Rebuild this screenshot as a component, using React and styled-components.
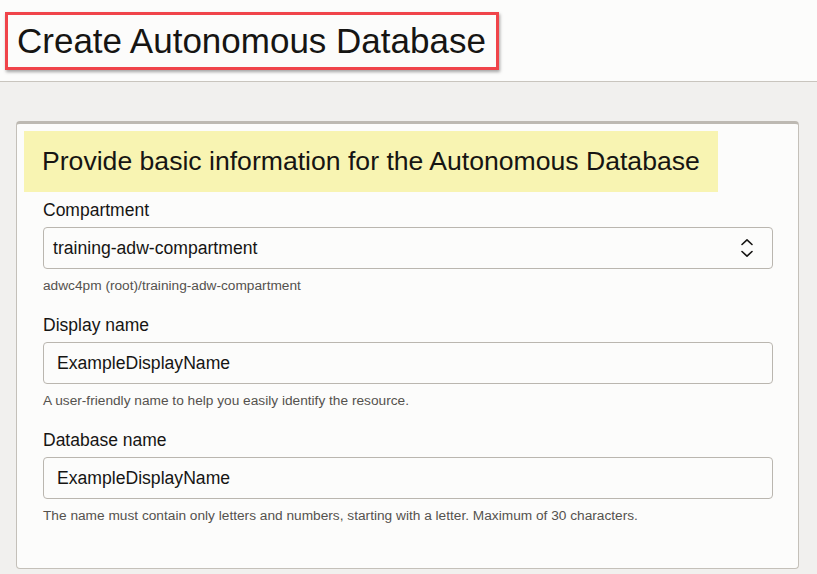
import React from 'react'
import styled, { createGlobalStyle } from "styled-components";

const GlobalStyle = createGlobalStyle`
  html, body {
    margin: 0;
    padding: 0;
    background: #f1f0ee;
    font-family: "Liberation Sans", Arial, sans-serif;
    color: #161513;
  }
`;

const Header = styled.header`
  height: 82px;
  background: #fcfcfb;
  border-bottom: 1px solid #c9c5be;
  display: flex;
  align-items: flex-start;
  padding: 12px 0 0 5px;
  box-sizing: border-box;
`;

const TitleBox = styled.div`
  border: 3px solid #f0444a;
  box-shadow: 1px 2px 3px rgba(0, 0, 0, 0.35);
  height: 58px;
  box-sizing: border-box;
  padding: 0 10px 0 9px;
  display: flex;
  align-items: center;
`;

const Title = styled.h1`
  margin: 0;
  font-size: 35px;
  font-weight: 400;
  line-height: 40px;
  color: #161513;
`;

const Main = styled.main`
  padding: 39px 18px 0 16px;
`;

const Panel = styled.section`
  background: #fcfcfb;
  border: 1px solid #c4c0b9;
  border-top: 3px solid #bdb9b2;
  border-radius: 4px;
  padding: 7px 7px 44px;
  box-sizing: border-box;
`;

const SectionTitle = styled.h2`
  display: inline-block;
  margin: 0;
  background: #f8f4b2;
  font-size: 26.6px;
  font-weight: 400;
  line-height: 61px;
  height: 61px;
  padding: 0 18px;
`;

const Form = styled.div`
  margin: 8px 18px 0 19px;
`;

const Field = styled.div`
  & + & {
    margin-top: 21px;
  }
`;

const Label = styled.label`
  display: block;
  font-size: 17.5px;
  line-height: 21px;
  margin-bottom: 6px;
`;

const InputBox = styled.div`
  height: 42px;
  box-sizing: border-box;
  border: 1px solid #bab6af;
  border-radius: 4px;
  background: #fcfcfb;
  display: flex;
  align-items: center;
  justify-content: space-between;
  padding: 0 18px 0 ${(p) => (p.$select ? "9px" : "13px")};
  font-size: 17.6px;
`;

const Help = styled.div`
  margin-top: 8px;
  font-size: 13.7px;
  line-height: 17px;
  color: #55524e;
`;

function UpDown() {
  return (
    <svg width="14" height="20" viewBox="0 0 14 20" fill="none" stroke="#161513" strokeWidth="1.6" strokeLinecap="round" strokeLinejoin="round">
      <path d="M2 6.5 L7 1.8 L12 6.5" />
      <path d="M2 13.5 L7 18.2 L12 13.5" />
    </svg>
  );
}

export default function App() {
  return (
    <>
      <GlobalStyle />
      <Header>
        <TitleBox>
          <Title>Create Autonomous Database</Title>
        </TitleBox>
      </Header>
      <Main>
        <Panel>
          <SectionTitle>Provide basic information for the Autonomous Database</SectionTitle>
          <Form>
            <Field>
              <Label>Compartment</Label>
              <InputBox $select>
                <span>training-adw-compartment</span>
                <UpDown />
              </InputBox>
              <Help>adwc4pm (root)/training-adw-compartment</Help>
            </Field>
            <Field>
              <Label>Display name</Label>
              <InputBox>ExampleDisplayName</InputBox>
              <Help>A user-friendly name to help you easily identify the resource.</Help>
            </Field>
            <Field>
              <Label>Database name</Label>
              <InputBox>ExampleDisplayName</InputBox>
              <Help>The name must contain only letters and numbers, starting with a letter. Maximum of 30 characters.</Help>
            </Field>
          </Form>
        </Panel>
      </Main>
    </>
  );
}
